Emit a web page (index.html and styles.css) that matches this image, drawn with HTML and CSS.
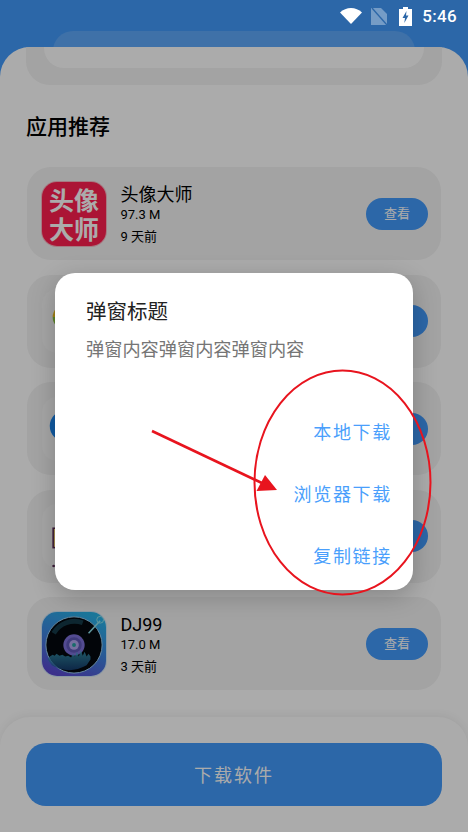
FILE: index.html
```html
<!DOCTYPE html>
<html lang="zh">
<head>
<meta charset="utf-8">
<title>应用推荐</title>
<link rel="stylesheet" href="styles.css">
</head>
<body>
<div class="page">
  <header class="header"><div class="header-pill"></div></header>
  <main class="sheet">
    <div class="banner"><div class="banner-inner"></div></div>
    <h2 class="section-title">应用推荐</h2>
    <div class="list">
      <div class="row">
        <div class="icon icon-red"><span>头</span><span>像</span><span>大</span><span>师</span></div>
        <div class="info">
          <div class="name">头像大师</div>
          <div class="meta">97.3 M</div>
          <div class="meta time">9 天前</div>
        </div>
        <div class="view">查看</div>
      </div>
      <div class="row">
        <div class="icon icon-plain"><svg viewBox="0 0 66 66" class="fill"><defs><linearGradient id="yg" x1="0" y1="0" x2="0" y2="1"><stop offset="0.5" stop-color="#f0c020"/><stop offset="0.5" stop-color="#8cc63f"/></linearGradient></defs><circle cx="24" cy="29" r="13" fill="url(#yg)"/></svg></div>
        <div class="info"></div>
        <div class="view"></div>
      </div>
      <div class="row">
        <div class="icon icon-plain"><svg viewBox="0 0 66 66" class="fill"><circle cx="24" cy="30" r="16" fill="#1a86f0"/></svg></div>
        <div class="info"></div>
        <div class="view"></div>
      </div>
      <div class="row">
        <div class="icon icon-plain"><svg viewBox="0 0 66 66" class="fill"><rect x="11.500" y="25" width="8" height="20" fill="#f5d37a" stroke="#5a2a55" stroke-width="1.6"/><circle cx="12" cy="64" r="1.400" fill="#5a2a55"/></svg></div>
        <div class="info"></div>
        <div class="view"></div>
      </div>
      <div class="row">
        <div class="icon icon-dj">
          <svg viewBox="0 0 66 66" class="fill">
            <defs>
              <linearGradient id="djbg" x1="0.700" y1="0" x2="0.300" y2="1"><stop offset="0" stop-color="#28b4e8"/><stop offset="0.500" stop-color="#3d86e0"/><stop offset="1" stop-color="#5a48d0"/></linearGradient>
              <linearGradient id="djw" x1="0" y1="0" x2="0" y2="1"><stop offset="0" stop-color="#3fb0c8"/><stop offset="1" stop-color="#1a4a88"/></linearGradient>
            </defs>
            <rect width="66" height="66" fill="url(#djbg)"/>
            <circle cx="33" cy="34" r="29" fill="#03080e" stroke="#9ccff0" stroke-width="1"/>
            <path d="M12 22a25 25 0 0 1 30-11" fill="none" stroke="#143a48" stroke-width="5"/>
            <circle cx="33" cy="34" r="11" fill="#7d70d8"/>
            <circle cx="33" cy="34" r="8" fill="#5f58b8"/>
            <circle cx="33" cy="34" r="5" fill="#b0a8f0"/>
            <circle cx="33" cy="34" r="2" fill="#24a0a0"/>
            <path d="M8 46l3-2 2 1 2-2 3 2 3-1 3 2 3-1 3 2 2-4 2 3 2-5 2 5 2-7 2 6 2-4 2 5 2-3 2 3v3l-4 6q-18 10-36 0l-4-6z" fill="url(#djw)" opacity="0.75"/>
            <path d="M48 22 60 9" stroke="#90e0ea" stroke-width="1.600" fill="none"/>
            <circle cx="60" cy="8" r="3.500" fill="none" stroke="#90e0ea" stroke-width="1"/>
          </svg>
        </div>
        <div class="info">
          <div class="name">DJ99</div>
          <div class="meta">17.0 M</div>
          <div class="meta time">3 天前</div>
        </div>
        <div class="view">查看</div>
      </div>
    </div>
    <footer class="footer"><div class="download">下载软件</div></footer>
  </main>

  <div class="overlay">
    <div class="dialog">
      <div class="dialog-title">弹窗标题</div>
      <div class="dialog-body">弹窗内容弹窗内容弹窗内容</div>
      <div class="dialog-actions">
        <div class="action">本地下载</div>
        <div class="action">浏览器下载</div>
        <div class="action">复制链接</div>
      </div>
    </div>
  </div>

  <svg class="annotation" viewBox="0 0 468 832">
    <ellipse cx="342.500" cy="482.500" rx="88" ry="112" fill="none" stroke="#e8141e" stroke-width="2"/>
    <line x1="152" y1="431" x2="264" y2="484" stroke="#e8141e" stroke-width="2.600"/>
    <polygon points="265,475 256.500,491 277,490" fill="#e8141e"/>
  </svg>

  <div class="status">
    <svg class="st-wifi" viewBox="0 0 22 16"><path d="M0 4.500C3 1.700 7 0 11 0s8 1.700 11 4.500L11 16z" fill="#fff"/></svg>
    <svg class="st-sim" viewBox="0 0 16 17"><path d="M0 0h10l6 6v11H0z" fill="#fff" opacity="0.35"/><path d="M1 0l15 17" stroke="#2c67a8" stroke-width="1.400"/></svg>
    <svg class="st-bat" viewBox="0 0 13 19"><path d="M4 0h5v2h4v17H0V2h4z" fill="#fff"/><path d="M7.500 4 3.500 11h2.500l-.7 5 4.200-7.500H7z" fill="#2c67a8"/></svg>
    <span class="st-time">5:46</span>
  </div>
</div>
</body>
</html>
```
FILE: styles.css
```css
* { box-sizing: border-box; }
html, body { margin: 0; padding: 0; }
body { font-family: Roboto, "Noto Sans CJK SC", sans-serif; }

.page {
  position: relative;
  width: 468px;
  height: 832px;
  overflow: hidden;
  background: #429afb;
  display: flex;
  flex-direction: column;
}

.header { height: 47px; flex: none; overflow: hidden; padding: 31px 53px 0; }
.header-pill { height: 60px; border-radius: 20px; background: rgba(255, 255, 255, 0.15); }

.sheet {
  flex: 1;
  background: #fff;
  border-radius: 30px 30px 0 0;
  display: flex;
  flex-direction: column;
  overflow: hidden;
}

.banner { flex: none; height: 38px; margin: 0 26px; background: #f3f3f3; border-radius: 0 0 24px 24px; padding: 0 18px; }
.banner-inner { height: 21px; background: #fff; border-radius: 0 0 20px 20px; }

.section-title {
  margin: 28px 0 0 26px;
  height: 28px;
  line-height: 28px;
  font-size: 21px;
  font-weight: 500;
  color: #000;
}

.list { margin: 26px 27px 0; display: flex; flex-direction: column; gap: 14.500px; }

.row {
  height: 93px;
  background: #f3f3f3;
  border-radius: 24px;
  padding: 0 13px 0 14px;
  display: flex;
  align-items: center;
  gap: 13.500px;
}

.icon { flex: none; width: 64px; height: 64px; margin: 1px; border-radius: 15px; overflow: hidden; }
.fill { display: block; width: 100%; height: 100%; }
.icon-red {
  background: #ff1f4f;
  box-shadow: 0 0 0 1px rgba(255, 90, 120, 0.4);
  display: grid;
  grid-template-columns: 25px 25px;
  grid-template-rows: 29px 29px;
  justify-content: center;
  align-content: center;
  justify-items: center;
  align-items: center;
  color: #fff;
  font-size: 25px;
  line-height: 29px;
  font-weight: 700;
  font-family: "Noto Sans CJK SC", sans-serif;
}
.icon-plain { background: #f8f8f8; }
.icon-dj { box-shadow: 0 0 0 1px rgba(160, 210, 250, 0.45); }

.info { flex: 1; color: #000; }
.name { font-size: 18px; line-height: 26px; }
.meta { font-size: 13px; line-height: 18px; margin-top: -2px; }
.time { margin-top: 4px; }

.view {
  flex: none;
  width: 62px;
  height: 32px;
  border-radius: 16px;
  background: #429afb;
  color: #fff;
  font-size: 13px;
  line-height: 32px;
  text-align: center;
}

.footer {
  margin-top: auto;
  height: 115px;
  flex: none;
  padding: 26px 26px 0;
  background: #fff;
  border-radius: 30px 30px 0 0;
  box-shadow: 0 -2px 8px rgba(0, 0, 0, 0.06);
}
.download {
  height: 63px;
  border-radius: 20px;
  background: #429afb;
  color: #fff;
  font-size: 18px;
  letter-spacing: 2px;
  line-height: 66px;
  text-align: center;
}

.overlay {
  position: absolute;
  inset: 0;
  background: rgba(0, 0, 0, 0.33);
  padding: 273px 55px 0;
}
.dialog {
  height: 317px;
  background: #fff;
  border-radius: 20px;
  padding: 24px 21px 0 31px;
  box-shadow: 0 6px 24px rgba(0, 0, 0, 0.22);
}
.dialog-title { font-size: 20.500px; line-height: 30px; color: #222; }
.dialog-body { margin-top: 10px; font-size: 18.200px; line-height: 26px; color: #757575; }
.dialog-actions { margin-top: 57px; display: flex; flex-direction: column; align-items: flex-end; gap: 36px; }
.action { font-size: 18px; line-height: 26px; letter-spacing: 1.700px; color: #4a9ffc; }

.annotation { position: absolute; left: 0; top: 0; width: 468px; height: 832px; pointer-events: none; }

.status {
  position: absolute;
  top: 0;
  right: 0;
  height: 32px;
  padding-right: 11px;
  display: flex;
  align-items: center;
  color: #fff;
}
.st-wifi { width: 22px; height: 16px; margin-right: 9px; }
.st-sim { width: 16px; height: 17px; margin-right: 12px; }
.st-bat { width: 13px; height: 19px; margin-right: 10px; }
.st-time { font-size: 17px; font-weight: 500; letter-spacing: 0.300px; }
```
